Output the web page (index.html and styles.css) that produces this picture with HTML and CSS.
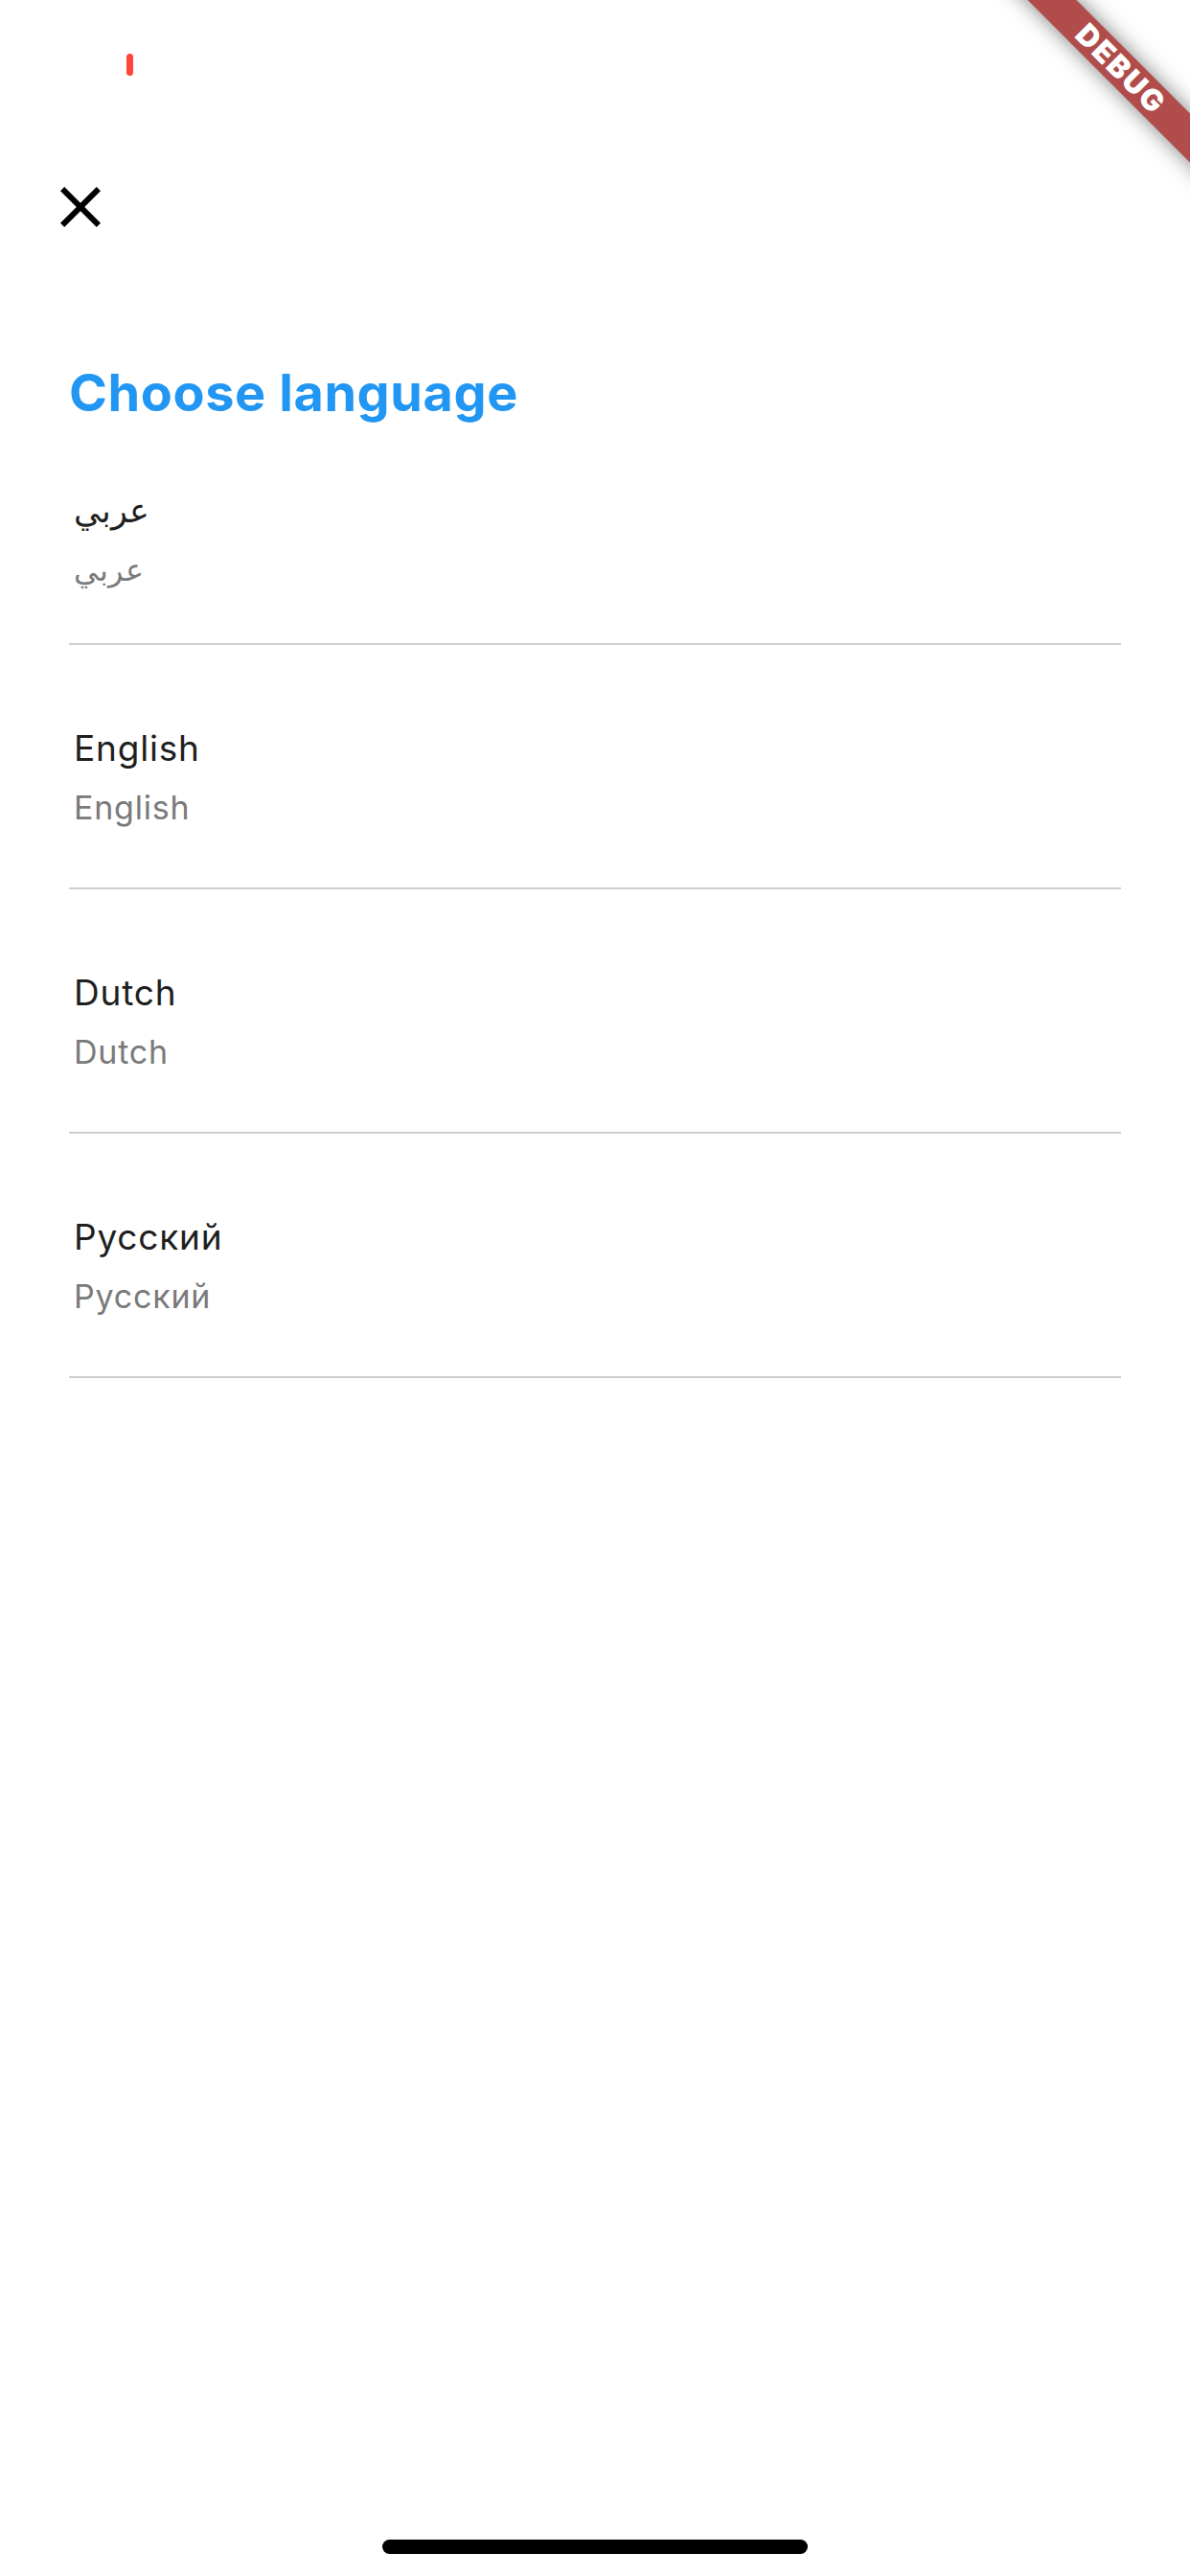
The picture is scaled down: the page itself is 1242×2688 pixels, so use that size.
FILE: index.html
```html
<!DOCTYPE html>
<html lang="en">
<head>
<meta charset="utf-8">
<title>Choose language</title>
<link rel="stylesheet" href="styles.css">
</head>
<body>
<div class="screen">
  <div class="status-bar">
    <span class="status-dot"></span>
    <span class="status-time">38</span>
  </div>
  <div class="toolbar">
    <button class="close-btn" aria-label="Close">
      <svg viewBox="0 0 24 24" width="72" height="72"><path d="M19 6.41L17.59 5 12 10.59 6.41 5 5 6.41 10.59 12 5 17.59 6.41 19 12 13.41 17.59 19 19 17.59 13.41 12z" fill="#000"/></svg>
    </button>
  </div>
  <div class="content">
    <h1 class="title">Choose language</h1>
    <ul class="lang-list">
      <li class="lang-item lang-item--first">
        <div class="lang-name lang-name--ar" lang="ar">عربي</div>
        <div class="lang-native lang-native--ar" lang="ar">عربي</div>
      </li>
      <li class="lang-item">
        <div class="lang-name">English</div>
        <div class="lang-native">English</div>
      </li>
      <li class="lang-item">
        <div class="lang-name">Dutch</div>
        <div class="lang-native">Dutch</div>
      </li>
      <li class="lang-item">
        <div class="lang-name">Русский</div>
        <div class="lang-native">Русский</div>
      </li>
    </ul>
  </div>
  <div class="home-indicator"></div>
  <div class="debug-corner"><div class="debug-banner">DEBUG</div></div>
</div>
</body>
</html>
```
FILE: styles.css
```css
* { box-sizing: border-box; }
html, body { margin: 0; padding: 0; background: #fff; }
body { font-family: Inter, "Noto Sans", sans-serif; }

.screen {
  position: relative;
  width: 1242px;
  height: 2688px;
  overflow: hidden;
  display: flex;
  flex-direction: column;
  background: #fff;
}

.status-bar {
  height: 132px;
  padding: 56px 0 0 132px;
  position: relative;
}
.status-dot {
  display: block;
  width: 7px;
  height: 23px;
  border-radius: 4px;
  background: #ff453a;
}
.status-time {
  position: absolute;
  left: 1082px;
  top: 38px;
  font-size: 46px;
  color: #fff;
  font-weight: 400;
  line-height: 56px;
}

.toolbar {
  padding: 48px 0 0 48px;
}
.close-btn {
  display: block;
  width: 72px;
  height: 72px;
  padding: 0;
  margin: 0;
  border: 0;
  background: none;
}
.close-btn svg { display: block; }

.content {
  padding: 0 72px;
}
.title {
  margin: 125px 0 0;
  font-size: 54px;
  line-height: 65px;
  font-weight: 700;
  color: #2196f3;
  letter-spacing: 0.6px;
}

.lang-list {
  list-style: none;
  margin: 0;
  padding: 0;
}
.lang-item {
  padding: 85px 5px 63px;
  border-bottom: 2px solid #cfcfcf;
  display: flex;
  flex-direction: column;
  gap: 19px;
}
.lang-item--first {
  padding-top: 68px;
  padding-bottom: 56px;
}
.lang-name {
  font-size: 37px;
  line-height: 45px;
  color: #1f1f1f;
  letter-spacing: 0.8px;
}
.lang-native {
  font-size: 34px;
  line-height: 41px;
  color: #7a7a7a;
  letter-spacing: 0.8px;
}
.lang-name--ar { font-size: 35px; letter-spacing: 0; }
.lang-native--ar { font-size: 32px; letter-spacing: 0; }

.home-indicator {
  margin: auto auto 23px;
  width: 444px;
  height: 15px;
  border-radius: 8px;
  background: #000;
}

.debug-corner {
  position: absolute;
  top: 0;
  right: 0;
  width: 240px;
  height: 240px;
  overflow: hidden;
}
.debug-banner {
  position: absolute;
  left: 8px;
  top: 54px;
  width: 320px;
  height: 36px;
  transform: rotate(45deg);
  background: #b14c4c;
  box-shadow: 0 0 22px rgba(0,0,0,0.5);
  color: #fff;
  font-family: Inter, "DejaVu Sans", sans-serif;
  font-weight: 900;
  font-size: 31px;
  line-height: 36px;
  text-align: center;
  letter-spacing: 2px;
}
```
